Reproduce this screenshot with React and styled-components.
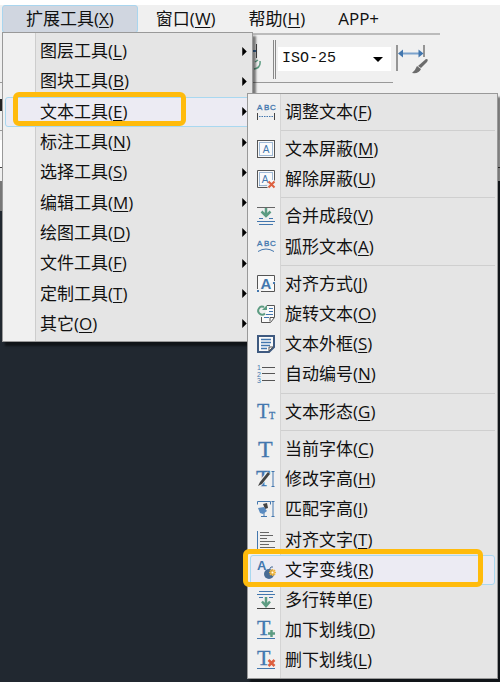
import React from 'react';
import styled, { createGlobalStyle } from "styled-components";

const BLUE = '#4377ae';
const GREEN = '#5d9c82';
const RED = '#dd6040';
const GRAY = '#555555';

const icons = {
  adjust: (
    <>
      <Abc y="7" />
      <path d="M.5 10v7M17.5 10v7" stroke="#444" />
      <path d="M2 13.5h14" stroke={BLUE} strokeDasharray="1.5 1" />
    </>
  ),
  mask: (
    <>
      <rect x=".5" y=".5" width="17" height="17" fill="#fafafa" stroke={GRAY} />
      <rect x="2.5" y="2.5" width="13" height="13" fill="none" stroke={BLUE} strokeDasharray="1 1" />
      <text x="9" y="13" fontSize="10" textAnchor="middle" fill={BLUE}>A</text>
    </>
  ),
  unmask: (
    <>
      <path d="M.5 17.5V.5h17v10M.5 17.5h10" fill="#fafafa" stroke={GRAY} />
      <path d="M2.5 15.5v-13h13v8M2.5 15.5h8" fill="none" stroke={BLUE} strokeDasharray="1 1" />
      <text x="8" y="13" fontSize="10" textAnchor="middle" fill={BLUE}>A</text>
      <path d="M11.5 11.5l6 6M17.5 11.5l-6 6" stroke={RED} strokeWidth="2" />
    </>
  ),
  merge: (
    <>
      <path d="M0 .5h18" stroke="#666" />
      <path d="M9 1v7M4.5 4.5L9 9l4.5-4.5" fill="none" stroke={GREEN} strokeWidth="2.5" />
      <path d="M2 11.5h4M12 11.500h4M0 14.5h18M2 17.5h14" stroke={BLUE} />
    </>
  ),
  arc: (
    <>
      <Abc y="8" />
      <path d="M1 13.5Q9 8.5 17 13.5" fill="none" stroke={BLUE} />
    </>
  ),
  align: (
    <>
      <path d="M.5 14V.5h17V6M17.5 9v7.5H4" fill="#fafafa" stroke={GRAY} />
      <text x="9" y="14" fontSize="15" fontWeight="bold" textAnchor="middle" fill={BLUE}>A</text>
      <path d="M0 15h2v2H0zM16 7h2v2h-2z" fill={BLUE} />
    </>
  ),
  rotate: (
    <>
      <path d="M10 .5h7.500v12l-4 5h-9V12" fill="#fafafa" stroke={GRAY} />
      <path d="M17 12.5h-4v4" fill="none" stroke={GRAY} />
      <path d="M12 3.5h4M12 6.5h4M9 9.5h7M7 12.5h5" stroke={BLUE} />
      <circle cx="4" cy="6" r="5" fill="#f0f0f0" />
      <path d="M8 8.5A4 4 0 1 1 7 2" fill="none" stroke={GREEN} strokeWidth="2" />
      <path d="M5 5h5V0z" fill={GREEN} />
    </>
  ),
  frame: (
    <>
      <path d="M1 1h16v11l-5 5H1z" fill="#fafafa" stroke="#3f5a80" strokeWidth="2" />
      <path d="M16 12h-4v4z" fill="#fafafa" stroke={GRAY} />
      <path d="M4 4.5h10M4 7.5h10M4 10.5h9M4 13.5h6" stroke={BLUE} strokeWidth="1.5" />
    </>
  ),
  numbering: (
    <>
      <text x="0" y="5" fontSize="7" fill={BLUE}>1</text>
      <text x="0" y="12" fontSize="7" fill={BLUE}>2</text>
      <text x="0" y="18" fontSize="7" fill={BLUE}>3</text>
      <path d="M5 2.5h13M5 8.5h13M5 15.5h13" stroke={GRAY} />
    </>
  ),
  shape: (
    <>
      <Serif x="0" y="15" fontSize="20">T</Serif>
      <Serif x="12" y="16" fontSize="10">T</Serif>
    </>
  ),
  font: <Serif x="1" y="17" fontSize="24">T</Serif>,
  editHeight: (
    <>
      <Serif x="-1" y="16" fontSize="23">T</Serif>
      <path d="M1 16L12 3" stroke="#f0f0f0" strokeWidth="5" />
      <path d="M1 16l2-4L11 2l2 2-8 10z" fill="#444" />
      <HeightMark />
    </>
  ),
  matchHeight: (
    <>
      <path d="M.5 4.5v-3h13v3M7 12v4.500M4 16.5h6" fill="none" stroke={BLUE} />
      <path d="M6 4l4-1 1 5-3 1z" fill="#444" />
      <path d="M1 8l6-1 3 4-4 3-3-1z" fill="#5a8bc0" />
      <HeightMark />
    </>
  ),
  alignText: (
    <>
      <path d="M.5 0v18" stroke={BLUE} />
      <path d="M3 1.5h9M3 4.5h13M3 7.5h7M3 10.5h15M3 13.5h9M3 16.5h15" stroke="#666" />
    </>
  ),
  explode: (
    <>
      <text x="0" y="9" fontSize="13" fontWeight="bold" fill={BLUE}>A</text>
      <circle cx="12" cy="13" r="5" fill="#486b94" />
      <path d="M12 9l2-3h2" fill="none" stroke="#486b94" />
      <path d="M15.5 8v7M12 11.5h7M13 9l5 5M18 9l-5 5" stroke="#f0b43c" strokeWidth="1.5" />
      <circle cx="15.5" cy="11.5" r="1" fill="#fff" />
    </>
  ),
  single: (
    <>
      <path d="M2 .5h14M0 3.5h18M2 6.5h4M12 6.5h4" stroke={BLUE} />
      <path d="M9 6v8M5 10.5L9 15l4-4.5" fill="none" stroke={GREEN} strokeWidth="2.5" />
      <path d="M0 17.5h18" stroke="#444" />
    </>
  ),
  addLine: (
    <>
      <Serif x="0" y="14" fontSize="22">T</Serif>
      <path d="M0 17.5h18" stroke={BLUE} />
      <path d="M11 12.5h7M14.5 9v7" stroke={GREEN} strokeWidth="2.5" />
    </>
  ),
  removeLine: (
    <>
      <Serif x="0" y="14" fontSize="22">T</Serif>
      <path d="M0 17.5h18" stroke={BLUE} />
      <path d="M11.5 9l6 6M17.5 9l-6 6" stroke={RED} strokeWidth="2.5" />
    </>
  ),
};

const menuBar = [
  { text: '扩展工具', hotkey: 'X', active: true },
  { text: '窗口', hotkey: 'W' },
  { text: '帮助', hotkey: 'H' },
  { text: 'APP+' },
];

const tools = [
  { text: '图层工具', hotkey: 'L' },
  { text: '图块工具', hotkey: 'B' },
  { text: '文本工具', hotkey: 'E', open: true },
  { text: '标注工具', hotkey: 'N' },
  { text: '选择工具', hotkey: 'S' },
  { text: '编辑工具', hotkey: 'M' },
  { text: '绘图工具', hotkey: 'D' },
  { text: '文件工具', hotkey: 'F' },
  { text: '定制工具', hotkey: 'T' },
  { text: '其它', hotkey: 'O' },
];

// null is a separator
const textTools = [
  { text: '调整文本', hotkey: 'F', icon: 'adjust' },
  null,
  { text: '文本屏蔽', hotkey: 'M', icon: 'mask' },
  { text: '解除屏蔽', hotkey: 'U', icon: 'unmask' },
  null,
  { text: '合并成段', hotkey: 'V', icon: 'merge' },
  { text: '弧形文本', hotkey: 'A', icon: 'arc' },
  null,
  { text: '对齐方式', hotkey: 'J', icon: 'align' },
  { text: '旋转文本', hotkey: 'O', icon: 'rotate' },
  { text: '文本外框', hotkey: 'S', icon: 'frame' },
  { text: '自动编号', hotkey: 'N', icon: 'numbering' },
  null,
  { text: '文本形态', hotkey: 'G', icon: 'shape' },
  null,
  { text: '当前字体', hotkey: 'C', icon: 'font' },
  { text: '修改字高', hotkey: 'H', icon: 'editHeight' },
  { text: '匹配字高', hotkey: 'I', icon: 'matchHeight' },
  { text: '对齐文字', hotkey: 'T', icon: 'alignText' },
  { text: '文字变线', hotkey: 'R', icon: 'explode', active: true },
  { text: '多行转单', hotkey: 'E', icon: 'single' },
  { text: '加下划线', hotkey: 'D', icon: 'addLine' },
  { text: '删下划线', hotkey: 'L', icon: 'removeLine' },
];

function Serif(props) {
  return <text fontFamily="Liberation Serif, serif" fill={BLUE} stroke={BLUE} strokeWidth="0.3" {...props} />;
}

function Abc({ y }) {
  return <text x="0 7 13" y={y} fontSize="8" fill={BLUE} stroke={BLUE} strokeWidth="0.3">ABC</text>;
}

function HeightMark() {
  return <path d="M14.5 1.5h3M14.5 16.5h3M16 2v14" stroke={BLUE} />;
}

const Label = ({ item }) => (
  <span>
    {item.text}
    {item.hotkey && <>(<Hotkey>{item.hotkey}</Hotkey>)</>}
  </span>
);

const TextMenu = () => (
  <SubMenu role="menu" aria-label="文本工具">
    {textTools.map((item, index) => (
      item ? (
        <Item key={index} role="none">
          <ItemButton role="menuitem" $icon $active={item.active}>
            <Icon viewBox="0 0 18 18" aria-hidden="true">{icons[item.icon]}</Icon>
            <Label item={item} />
          </ItemButton>
          {item.active && <SubMark />}
        </Item>
      ) : <Separator key={index} role="separator" />
    ))}
  </SubMenu>
);

const App = () => {
  return (
    <Page>
      <GlobalStyle />
      <MenuBar role="menubar">
        {menuBar.map((item) => (
          <BarButton key={item.text} role="menuitem" $active={item.active}>
            <Label item={item} />
          </BarButton>
        ))}
        <MainMenu role="menu" aria-label="扩展工具">
          {tools.map((item) => (
            <Item key={item.text} role="none">
              <ItemButton role="menuitem" aria-haspopup="menu" $active={item.open}>
                <Label item={item} />
                <Arrow viewBox="0 0 4 8" aria-hidden="true"><path d="M0 0l4 4-4 4z" /></Arrow>
              </ItemButton>
              {item.open && <TextMenu />}
              {item.open && <MainMark />}
            </Item>
          ))}
        </MainMenu>
      </MenuBar>
      <Toolbars>
        <StyleBar>
          <UpdateIcon viewBox="0 0 12 32" aria-hidden="true">
            <path d="M0 8h3" stroke={BLUE} strokeWidth="2" />
            <path d="M3.500 1v14" stroke="#444" />
            <path d="M2 19l3-2M7 18q1 7-6 8" fill="none" stroke={GREEN} strokeWidth="1.5" />
          </UpdateIcon>
          <Grip />
          <SelectBox>
            <StyleSelect aria-label="标注样式" defaultValue="ISO-25">
              <option>ISO-25</option>
            </StyleSelect>
            <Caret viewBox="0 0 10 5" aria-hidden="true"><path d="M0 0h10L5 5z" /></Caret>
          </SelectBox>
          <BrushButton aria-label="标注样式管理">
            <svg width="32" height="30" viewBox="0 0 32 30" aria-hidden="true">
              <path d="M1 1v26M28 1v12" stroke="#777" strokeWidth="1.5" />
              <path d="M4 9.5h22" stroke="#7ba2cc" strokeWidth="2" />
              <path d="M2 9.5l5-4v8zM27.5 9.5l-5-4v8z" fill={BLUE} />
              <path d="M30 15q3 0 1 3l-6 6-3-2z" fill="#6b6b6b" />
              <path d="M21 22l4 3q-2 5-9 4 3-2 5-7z" fill="#6b6b6b" />
            </svg>
          </BrushButton>
        </StyleBar>
      </Toolbars>
      <TabStrip />
    </Page>
  );
};

export default App;

const GlobalStyle = createGlobalStyle`
  * {
    box-sizing: border-box;
  }
  body {
    margin: 0;
    background: #212830;
    color: #111;
    font: 17px/24px "Open Sans", "Noto Sans CJK SC", sans-serif;
  }
  button, select {
    border: 0;
    padding: 0;
    background: none;
    color: inherit;
    font: inherit;
  }
  ul {
    list-style: none;
    margin: 0;
    padding: 0;
  }
`;

const Page = styled.div`
  min-height: 100vh;
  overflow: hidden;
  background: #212830;
`;

const MenuBar = styled.nav`
  position: relative;
  display: flex;
  padding-left: 2px;
  border-top: 5px solid #fff;
  background: #f0f0f0;
`;

const BarButton = styled.button`
  height: 28px;
  padding: 0 ${props => (props.$active ? '23px' : '14px 0 17px')};
  border: 1px solid ${props => (props.$active ? '#a9d5ee' : 'transparent')};
  border-radius: 3px;
  background: ${props => (props.$active ? '#d0d6e0' : 'transparent')};
`;

const Hotkey = styled.span`
  text-decoration: underline;
  text-decoration-thickness: 1px;
  text-underline-offset: 2px;
  text-decoration-skip-ink: none;
`;

const Menu = styled.ul`
  position: absolute;
  z-index: 1;
  display: flex;
  flex-direction: column;
  width: 251px;
  border: 1px solid #999;
  box-shadow: 3px 4px 2px rgba(0, 0, 0, 0.5);
`;

const MainMenu = styled(Menu)`
  top: 27px;
  left: 2px;
  min-height: 310px;
  padding: 3px 0 2px;
  background: linear-gradient(90deg, #f0f0f0 32px, #cdcdcd 32px, #cdcdcd 33px, #e5e5e5 33px);
`;

const SubMenu = styled(Menu)`
  top: -4px;
  left: calc(100% - 5px);
  min-height: 586px;
  padding: 3px 0 2px;
  background: linear-gradient(90deg, #f0f0f0 32px, #d4d4d4 32px, #d4d4d4 33px, #e5e5e5 33px);
`;

const Item = styled.li`
  position: relative;
  display: flex;
  flex: 1 0 30px;
  padding: 0 2px;
`;

const ItemButton = styled.button`
  display: flex;
  flex: 1;
  align-items: center;
  gap: 10px;
  padding: 0 2px 0 ${props => (props.$icon ? 6 : 34)}px;
  border: 1px solid ${props => (props.$active ? '#a9d8f0' : 'transparent')};
  border-radius: 3px;
  background: ${props => (props.$active ? '#ecebf3' : 'transparent')};
`;

const Icon = styled.svg`
  width: 18px;
  height: 18px;
  overflow: visible;
  font-family: "Liberation Sans", sans-serif;
`;

const Arrow = styled.svg`
  width: 5px;
  height: 9px;
  margin-left: auto;
`;

const Separator = styled.li`
  flex: 0 0 7px;
  margin: 0 2px 0 33px;
  background: linear-gradient(transparent 3px, #cfcfcf 3px, #cfcfcf 4px, transparent 4px);
`;

// orange callouts drawn over the menus
const Mark = styled.div`
  position: absolute;
  z-index: 2;
  border: 5px solid #ffbb0c;
  border-radius: 6px;
  pointer-events: none;
`;

const MainMark = styled(Mark)`
  top: -5px;
  bottom: 1px;
  left: 10px;
  width: 173px;
`;

const SubMark = styled(Mark)`
  top: -6px;
  bottom: -2px;
  left: -5px;
  right: 14px;
`;

const Toolbars = styled.div`
  min-height: 148px;
  padding-left: 253px;
  background:
    linear-gradient(#999, #999) 0 49px / 100px 1px no-repeat,
    linear-gradient(#222, #222) 0 66px / 2px 12px no-repeat,
    linear-gradient(#999, #999) 0 97px / 100px 1px no-repeat,
    linear-gradient(#444, #444) 0 134px / 100% 1px no-repeat,
    linear-gradient(#fff, #fff) 0 107px / 100% 27px no-repeat,
    #f0f0f0;
`;

const StyleBar = styled.div`
  display: flex;
  align-items: center;
  width: 187px;
  height: 50px;
  border-top: 2px solid #bbb;
  background: linear-gradient(#999, #999) 0 100% / 140px 1px no-repeat;
`;

const UpdateIcon = styled.svg`
  width: 12px;
  height: 32px;
`;

const Grip = styled.div`
  width: 3px;
  height: 39px;
  margin: 0 2px 0 8px;
  border: solid #888;
  border-width: 0 1px;
`;

const SelectBox = styled.label`
  display: grid;
  align-items: center;
  width: 113px;
  background: #fff;
`;

const StyleSelect = styled.select`
  grid-area: 1 / 1;
  height: 24px;
  padding-left: 4px;
  appearance: none;
  font: 15px/24px "Liberation Mono", monospace;
`;

const Caret = styled.svg`
  grid-area: 1 / 1;
  justify-self: end;
  width: 10px;
  height: 5px;
  margin-right: 8px;
  pointer-events: none;
`;

const BrushButton = styled.button`
  display: flex;
  margin-left: 5px;
`;

const TabStrip = styled.div`
  height: 30px;
  background: linear-gradient(90deg, #777 50%, #212830 50%);
`;
